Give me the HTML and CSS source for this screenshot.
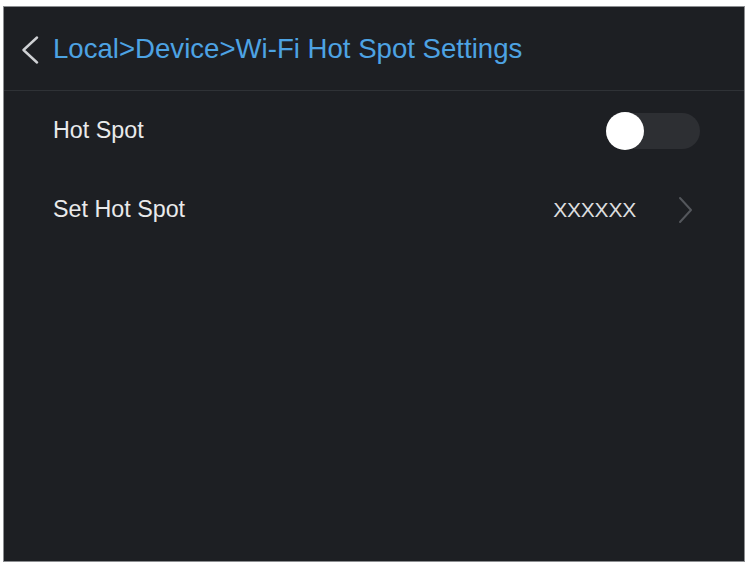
FILE: index.html
```html
<!DOCTYPE html>
<html>
<head>
<meta charset="utf-8">
<link rel="stylesheet" href="styles.css">
</head>
<body>
<div class="screen">
  <header class="header">
    <svg class="back" width="18" height="28" viewBox="0 0 18 28"><path d="M16 1.5 L2.5 14 L16 26.5" fill="none" stroke="#cfd1d4" stroke-width="2.4" stroke-linecap="round" stroke-linejoin="round"/></svg>
    <h1 class="title">Local&gt;Device&gt;Wi-Fi Hot Spot Settings</h1>
  </header>
  <div class="list">
    <div class="row">
      <span class="label">Hot Spot</span>
      <div class="toggle"><span class="knob"></span></div>
    </div>
    <div class="row">
      <span class="label">Set Hot Spot</span>
      <div class="value-group">
        <span class="value">XXXXXX</span>
        <svg class="chev" width="16" height="28" viewBox="0 0 16 28"><path d="M3 2 L14 14 L3 26" fill="none" stroke="#54575c" stroke-width="2" stroke-linecap="round" stroke-linejoin="round"/></svg>
      </div>
    </div>
  </div>
</div>
</body>
</html>
```
FILE: styles.css
```css
* { box-sizing: border-box; }
html, body { margin: 0; padding: 0; background: #ffffff; }
body { width: 748px; height: 565px; padding: 6px 3px 3px 3px; }
.screen {
  width: 742px;
  height: 556px;
  background: #1d1f23;
  border: 1px solid #8c8e91;
  font-family: "Liberation Sans", Arial, sans-serif;
  display: flex;
  flex-direction: column;
}
.header {
  height: 84px;
  border-bottom: 1px solid #2f3236;
  display: flex;
  align-items: center;
  padding-left: 17px;
  gap: 14px;
}
.back { display: block; margin-top: 2px; }
.title {
  margin: 0;
  font-size: 27.6px;
  font-weight: normal;
  color: #4da3e3;
}
.list { display: flex; flex-direction: column; }
.row {
  height: 79px;
  display: flex;
  align-items: center;
  justify-content: space-between;
  padding: 0 44px 0 49px;
}
.label { font-size: 23.3px; color: #e9eaeb; }
.toggle {
  width: 94px;
  height: 36px;
  border-radius: 18px;
  background: #2d2f33;
  position: relative;
}
.knob {
  position: absolute;
  left: 0;
  top: -1px;
  width: 38px;
  height: 38px;
  border-radius: 50%;
  background: #ffffff;
}
.value-group { display: flex; align-items: center; gap: 39px; padding-right: 7px; }
.value { font-size: 21px; color: #dcdddf; letter-spacing: -0.2px; margin-right: 2px; }
.chev { display: block; }
```
